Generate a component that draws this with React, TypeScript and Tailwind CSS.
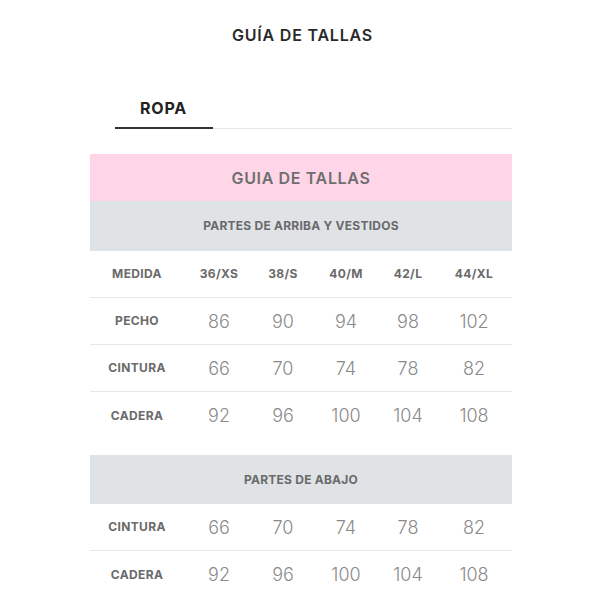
const sizes = ['36/XS', '38/S', '40/M', '42/L', '44/XL']

const upper = [
  { label: 'PECHO', values: ['86', '90', '94', '98', '102'] },
  { label: 'CINTURA', values: ['66', '70', '74', '78', '82'] },
  { label: 'CADERA', values: ['92', '96', '100', '104', '108'] },
]

const lower = [
  { label: 'CINTURA', values: ['66', '70', '74', '78', '82'] },
  { label: 'CADERA', values: ['92', '96', '100', '104', '108'] },
]

const cols = 'grid grid-cols-[94px_70px_58px_68px_56px_76px] items-center'

function Row({ label, values, last }: { label: string; values: string[]; last?: boolean }) {
  return (
    <div className={`${cols} h-[47px] ${last ? '' : 'border-b border-[#e6e6e6]'}`}>
      <div className="text-center text-[12px] font-bold text-[#6a6a6a] tracking-[0.03em]">{label}</div>
      {values.map((v, i) => (
        <div key={i} className="text-center text-[18px] font-light text-[#8a8a8a]">{v}</div>
      ))}
    </div>
  )
}

export default function App() {
  return (
    <div className="min-h-[605px] w-[605px] bg-white font-['Inter',sans-serif] pt-[24px]">
      {/* Title */}
      <h1 className="text-center text-[16px] font-semibold text-[#2a2a2a] tracking-[0.05em] leading-[22px]">
        GUÍA DE TALLAS
      </h1>

      {/* Tabs */}
      <div className="ml-[115px] mt-[50px] mr-[93px] flex border-b border-[#e6e6e6]">
        <div className="w-[98px] border-b-2 border-[#333] -mb-px pb-[7px] pl-[25px] text-[16px] font-bold text-[#222] tracking-[0.05em]">
          ROPA
        </div>
      </div>

      {/* Table */}
      <div className="ml-[90px] w-[422px] mt-[25px]">
        <div className="h-[47px] bg-[#ffd6e8] flex items-center justify-center text-[16px] font-semibold text-[#6e6e6e] tracking-[0.04em]">
          GUIA DE TALLAS
        </div>
        <div className="h-[50px] bg-[#dfe3e6] flex items-center justify-center text-[12px] font-bold text-[#6a6a6a] tracking-[0.02em]">
          PARTES DE ARRIBA Y VESTIDOS
        </div>
        <div className={`${cols} h-[47px] border-b border-[#e6e6e6]`}>
          <div className="text-center text-[12px] font-bold text-[#6a6a6a] tracking-[0.03em]">MEDIDA</div>
          {sizes.map(s => (
            <div key={s} className="text-center text-[12px] font-bold text-[#6a6a6a] tracking-[0.03em]">{s}</div>
          ))}
        </div>
        {upper.map((r, i) => (
          <Row key={r.label} label={r.label} values={r.values} last={i === upper.length - 1} />
        ))}

        <div className="h-[49px] mt-[16px] bg-[#dfe3e6] flex items-center justify-center text-[12px] font-bold text-[#6a6a6a] tracking-[0.02em]">
          PARTES DE ABAJO
        </div>
        {lower.map((r, i) => (
          <Row key={r.label} label={r.label} values={r.values} last={i === lower.length - 1} />
        ))}
      </div>
    </div>
  )
}
